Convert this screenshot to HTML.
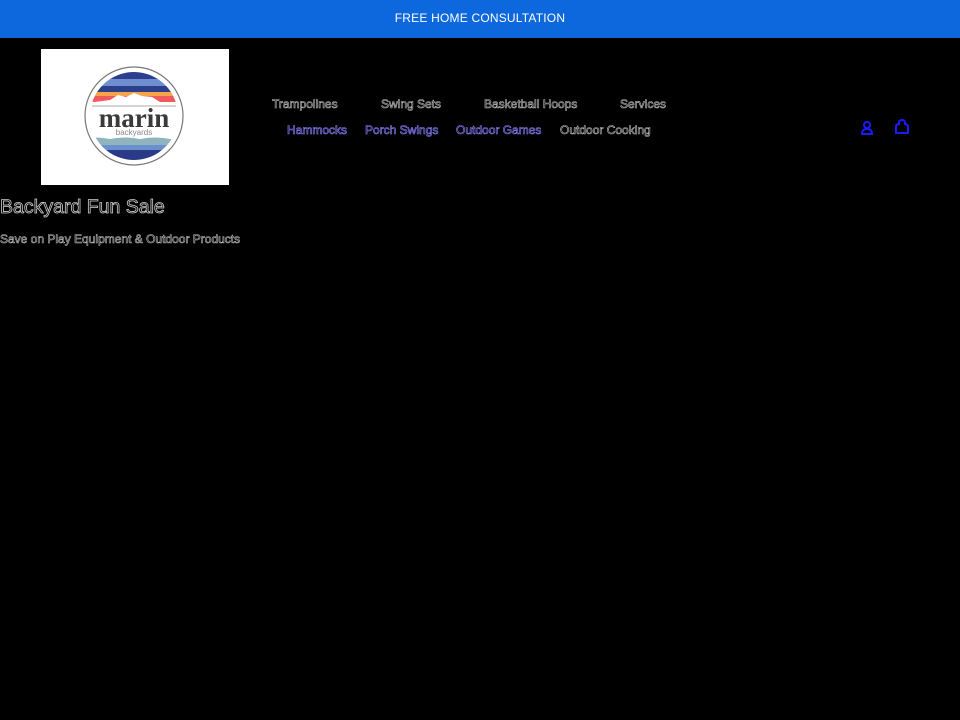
<!DOCTYPE html>
<html><head><meta charset="utf-8"><style>
*{margin:0;padding:0;box-sizing:border-box}
body{width:960px;height:720px;background:#000;font-family:"Liberation Sans",sans-serif;position:relative;overflow:hidden}
.bar{position:absolute;left:0;top:0;width:960px;height:38px;background:#0d68dd;color:#fff;font-size:12px;text-align:center;line-height:37px;letter-spacing:.2px}
.logo{position:absolute;left:41px;top:49px;width:188px;height:136px;background:#fff}
.o{color:#000;-webkit-text-stroke:0.6px #bbb;position:absolute;font-size:12px;white-space:nowrap}
.b{color:#000;-webkit-text-stroke:0.6px #8a84ff;position:absolute;font-size:12px;white-space:nowrap}
</style></head><body>
<div class="bar">FREE HOME CONSULTATION</div>
<div class="logo">
<svg width="188" height="136" viewBox="41 49 188 136">
<defs><clipPath id="c"><circle cx="134" cy="116" r="44"/></clipPath></defs>
<circle cx="134" cy="116" r="49" fill="#fff" stroke="#777" stroke-width="1.2"/>
<g clip-path="url(#c)">
<rect x="80" y="70" width="110" height="9" fill="#2d3f8c"/>
<rect x="80" y="79" width="110" height="7" fill="#6d8fd0"/>
<rect x="80" y="86" width="110" height="6" fill="#2b3f8a"/>
<rect x="80" y="92" width="110" height="4" fill="#f7a34a"/>
<rect x="80" y="96" width="110" height="6" fill="#f2595a"/>
<path d="M80 104 L110 100 L118 95 L126 97 L134 93 L142 96 L152 97 L160 102 L190 104 L190 108 L80 108Z" fill="#fff"/>
<rect x="80" y="108" width="110" height="30" fill="#fff"/>
<path d="M80 150 L80 139 Q95 136 110 139 Q125 136 140 139 Q155 136 170 139 Q180 137 190 139 L190 150Z" fill="#8fb4bd"/>
<rect x="80" y="145" width="110" height="5" fill="#6a90d0"/>
<rect x="80" y="150" width="110" height="12" fill="#2a3a86"/>
</g>
<line x1="92" y1="106" x2="176" y2="106" stroke="#555" stroke-width=".6"/>
<text x="134" y="127" text-anchor="middle" font-family="Liberation Serif,serif" font-weight="bold" font-size="27" fill="#3a3a3a">marin</text>
<text x="134" y="135" text-anchor="middle" font-family="Liberation Sans,sans-serif" font-size="8" fill="#888">backyards</text>
</svg>
</div>
<div class="o" style="left:272px;top:97px">Trampolines</div>
<div class="o" style="left:381px;top:97px">Swing Sets</div>
<div class="o" style="left:484px;top:97px">Basketball Hoops</div>
<div class="o" style="left:620px;top:97px">Services</div>
<div class="b" style="left:287px;top:123px">Hammocks</div>
<div class="b" style="left:365px;top:123px">Porch Swings</div>
<div class="b" style="left:456px;top:123px">Outdoor Games</div>
<div class="o" style="left:560px;top:123px">Outdoor Cooking</div>
<svg style="position:absolute;left:860px;top:120px" width="14" height="16"><circle cx="7" cy="5" r="3" fill="none" stroke="#1a1aff" stroke-width="2"/><path d="M2 14 Q2 9 7 9 Q12 9 12 14Z" fill="none" stroke="#1a1aff" stroke-width="2"/></svg>
<svg style="position:absolute;left:894px;top:119px" width="16" height="16"><path d="M2 14 L2 8 Q2 5 5 5 L5 4 Q5 1 8 1 Q11 1 11 4 L11 5 Q14 5 14 8 L14 14Z" fill="none" stroke="#1a1aff" stroke-width="2"/></svg>
<div class="o" style="left:0;top:196px;font-size:19.5px;-webkit-text-stroke:0.8px #ccc">Backyard Fun Sale</div>
<div class="o" style="left:0;top:232px;font-size:12px">Save on Play Equipment &amp; Outdoor Products</div>
</body></html>
